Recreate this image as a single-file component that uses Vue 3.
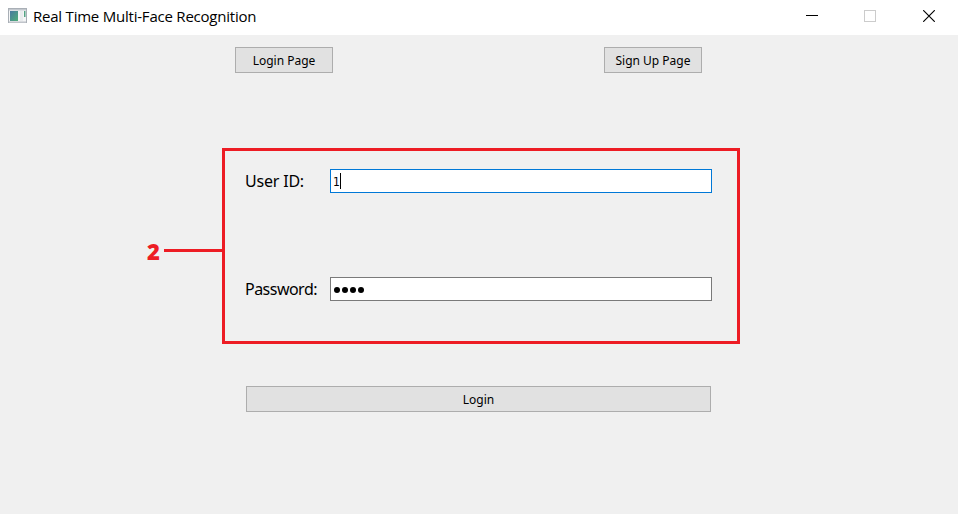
<script setup>
import { ref } from 'vue'

const userId = ref('1')
const passwordLength = 4
</script>

<template>
  <div class="window">
    <header class="titlebar">
      <svg class="app-icon" width="19" height="16" viewBox="0 0 19 16">
        <defs>
          <linearGradient id="screen" x1="0" y1="0" x2="1" y2="1">
            <stop offset="0" stop-color="#4878a0" />
            <stop offset="1" stop-color="#4fae78" />
          </linearGradient>
        </defs>
        <rect x="0.5" y="0.5" width="18" height="14" fill="#f4f5f6" stroke="#a9afb6" />
        <rect x="1" y="1" width="17" height="1.5" fill="#c3c8ce" />
        <rect x="1" y="13" width="17" height="1.5" fill="#d7dade" />
        <rect x="2" y="3" width="8" height="10" fill="url(#screen)" />
        <rect x="12" y="3" width="3" height="10" fill="#e9ebed" />
        <rect x="16" y="3" width="1.5" height="6" fill="#54a383" />
      </svg>
      <h1 class="title">Real Time Multi-Face Recognition</h1>
      <div class="controls">
        <svg width="12" height="12" viewBox="0 0 12 12"><path d="M0 5.5H12" stroke="#000" /></svg>
        <svg width="12" height="12" viewBox="0 0 12 12"><rect x="0.5" y="0.5" width="11" height="11" fill="none" stroke="#ccc" /></svg>
        <svg class="close" width="12" height="12" viewBox="0 0 12 12"><path d="M0.2 0.2L11.8 11.8M11.8 0.2L0.2 11.8" stroke="#000" stroke-width="1.15" /></svg>
      </div>
    </header>

    <nav class="pages">
      <button class="btn login-page"><span>Login Page</span></button>
      <button class="btn signup-page"><span>Sign Up Page</span></button>
    </nav>

    <main class="callout">
      <div class="marker">2</div>
      <div class="pointer"></div>
      <section class="frame">
        <div class="row">
          <label class="user-label">User ID:</label>
          <div class="field focused"><span>{{ userId }}</span><i class="caret"></i></div>
        </div>
        <div class="row">
          <label class="pass-label">Password:</label>
          <div class="field"><b v-for="n in passwordLength" :key="n" class="dot"></b></div>
        </div>
      </section>
    </main>

    <button class="btn submit"><span>Login</span></button>
  </div>
</template>

<style>
body {
  background: #f0f0f0;
}
</style>

<style scoped>
.window {
  width: 958px;
  height: 514px;
  overflow: hidden;
  background: #f0f0f0;
  color: #000;
  font-family: "Noto Sans", sans-serif;
}
.titlebar {
  display: flex;
  height: 35px;
  box-sizing: border-box;
  padding: 8px 23px 0 8px;
  background: #fff;
}
.title {
  margin: -2px 0 0 6px;
  font: 400 15px/20px "Open Sans", sans-serif;
  letter-spacing: -0.22px;
  white-space: nowrap;
}
.controls {
  display: flex;
  gap: 46px;
  margin: 2px 0 0 auto;
}
.close {
  margin-left: 1px;
}
.pages {
  display: flex;
  gap: 271px;
  padding: 12px 0 0 235px;
}
.btn {
  display: flex;
  align-items: center;
  justify-content: center;
  box-sizing: border-box;
  width: 98px;
  height: 26px;
  padding: 1px 0 0;
  border: 1px solid #adadad;
  border-radius: 0;
  background: #e1e1e1;
  color: #000;
  font: 400 12px/16px "Noto Sans", sans-serif;
  white-space: nowrap;
}
.callout {
  display: flex;
  margin-top: 75px;
  padding-left: 147px;
}
.marker {
  width: 17px;
  padding-top: 89px;
  color: #ed1c24;
  font: 900 22px/28px "Noto Sans", sans-serif;
}
.pointer {
  width: 58px;
  height: 3px;
  margin-top: 101px;
  background: #ed1c24;
}
.frame {
  display: flex;
  flex-direction: column;
  gap: 84px;
  box-sizing: border-box;
  width: 518px;
  height: 196px;
  padding: 18px 25px 0 20px;
  border: 3px solid #ed1c24;
}
.row {
  display: flex;
  height: 24px;
}
label {
  width: 85px;
  font-size: 16px;
  line-height: 24px;
  white-space: nowrap;
}
.user-label {
  letter-spacing: -0.2px;
}
.pass-label {
  letter-spacing: -0.52px;
}
.field {
  display: flex;
  align-items: center;
  box-sizing: border-box;
  width: 382px;
  padding-left: 2px;
  border: 1px solid #7a7a7a;
  background: #fff;
  font: 12px/22px "DejaVu Sans Condensed", "DejaVu Sans", sans-serif;
}
.field span {
  padding-top: 2px;
}
.focused {
  border-color: #0078d7;
}
.caret {
  width: 1px;
  height: 16px;
  background: #000;
}
.dot {
  width: 6px;
  height: 6px;
  margin: 2px 1px 0;
  border-radius: 50%;
  background: #000;
}
.submit {
  width: 465px;
  margin: 42px 0 0 246px;
}
</style>
